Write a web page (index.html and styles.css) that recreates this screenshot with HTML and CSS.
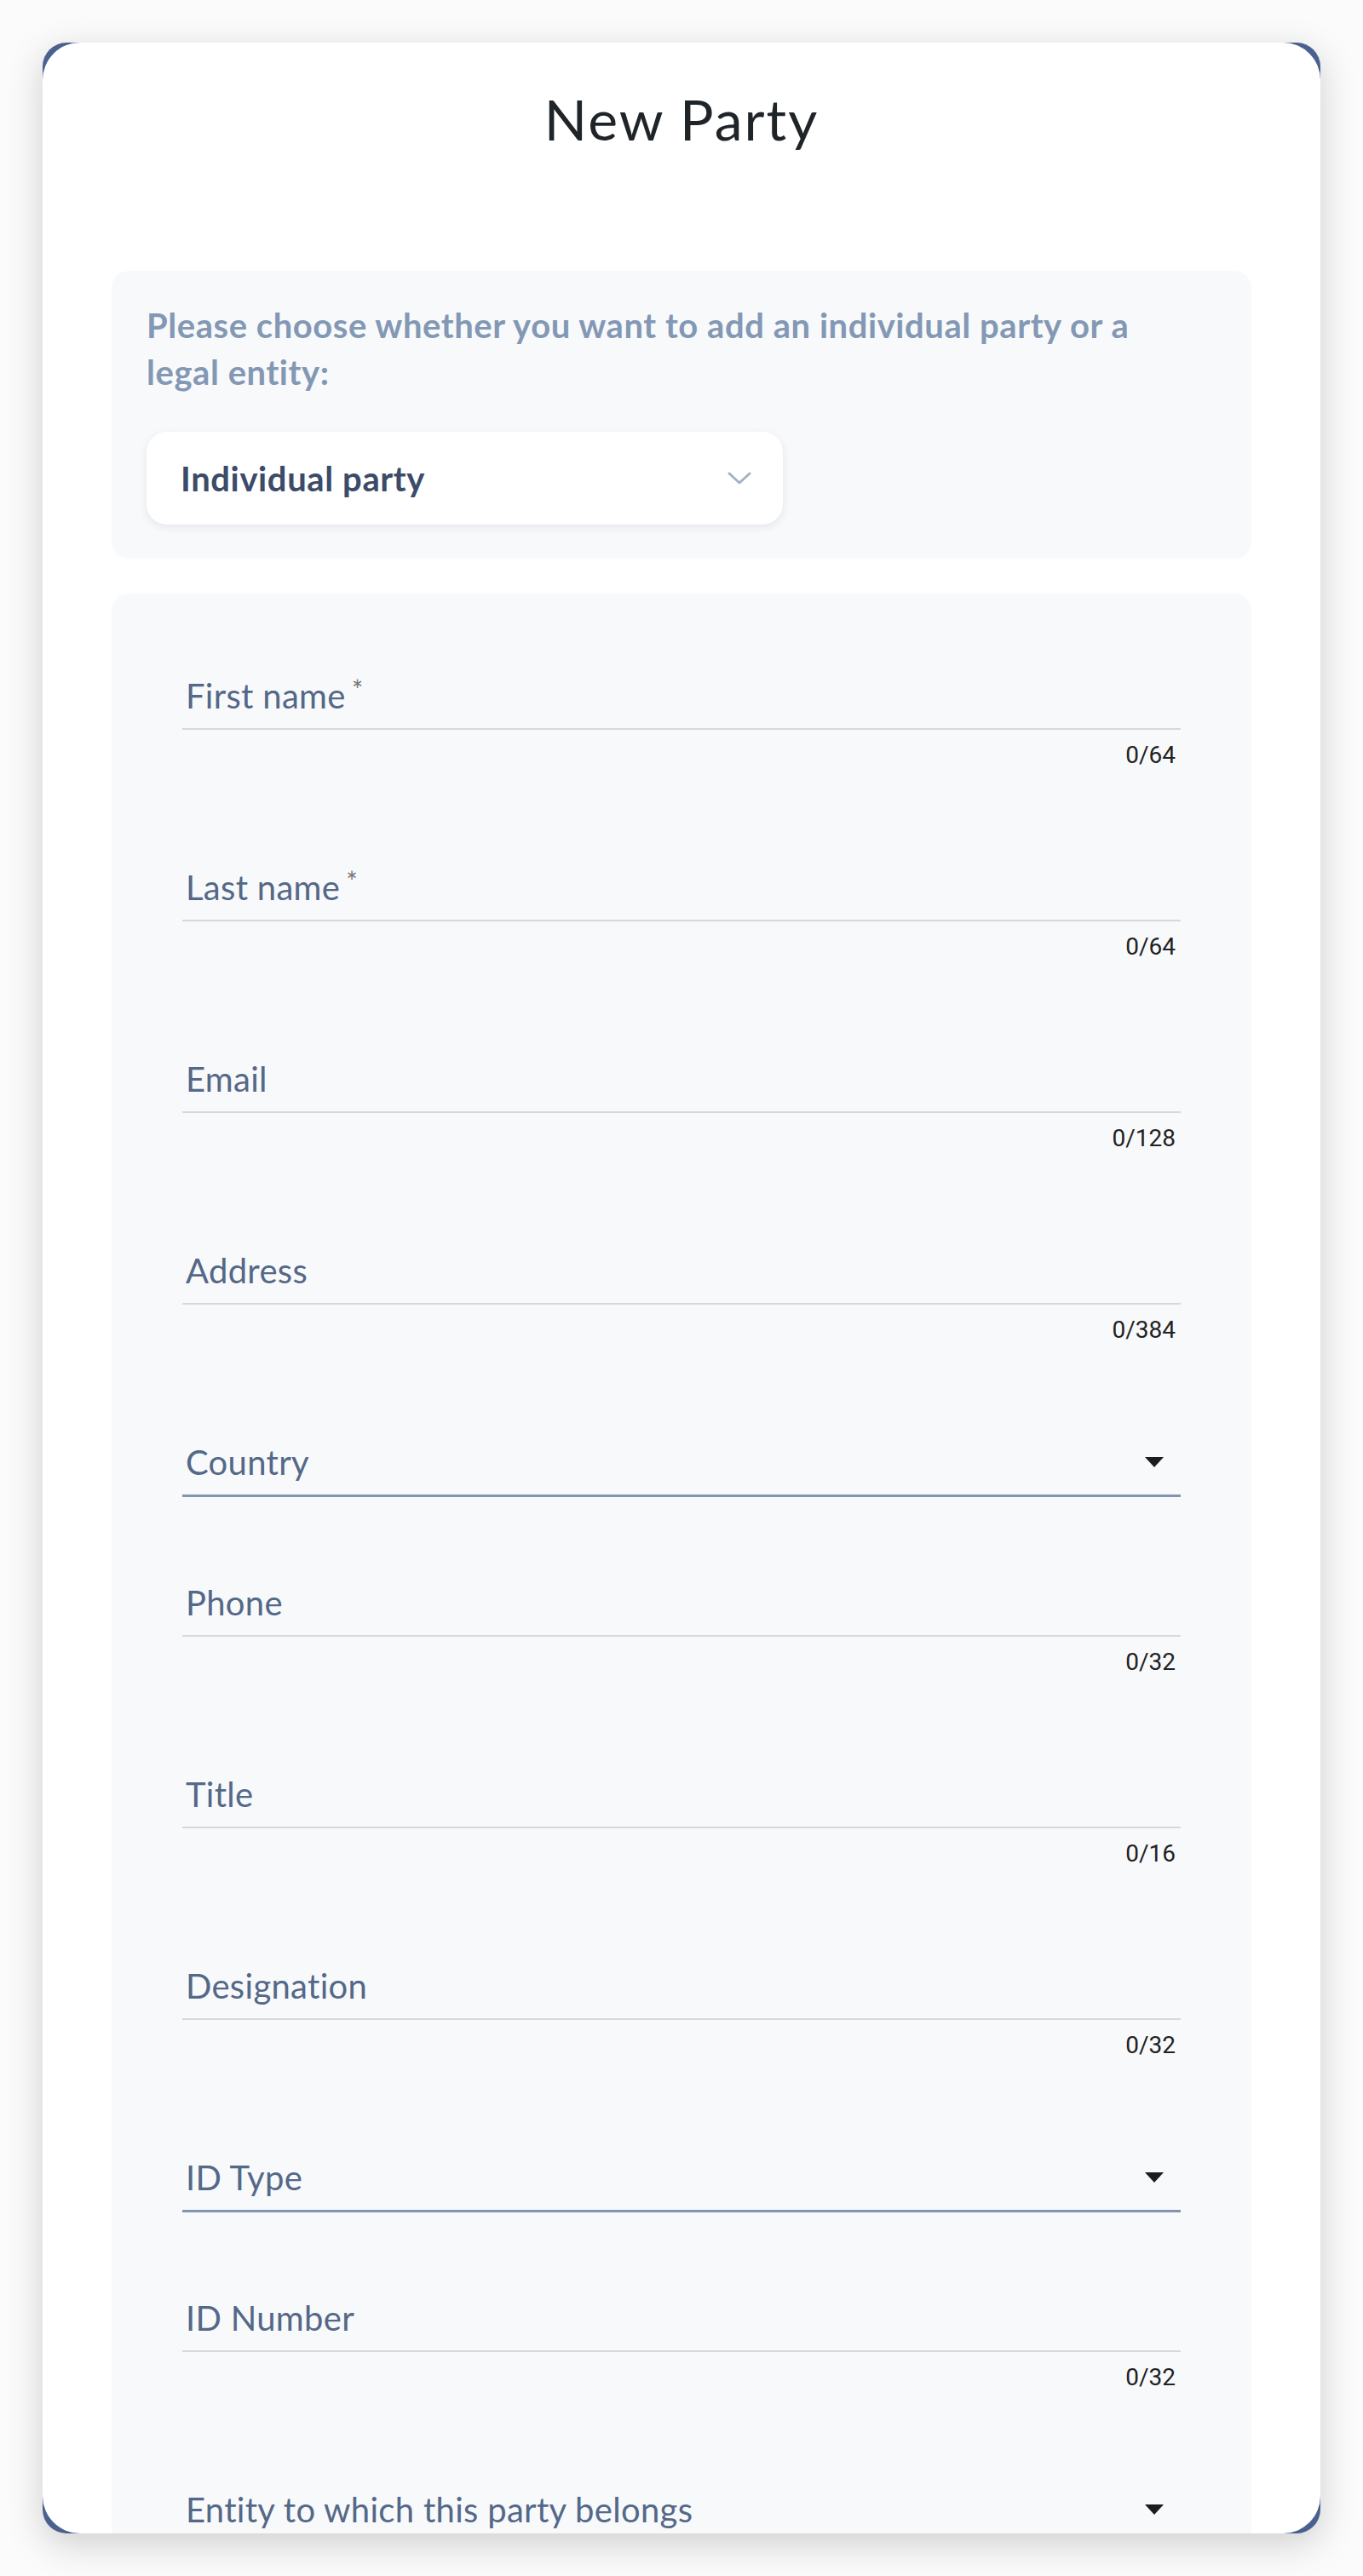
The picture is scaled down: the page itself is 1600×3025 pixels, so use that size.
FILE: index.html
```html
<!DOCTYPE html>
<html lang="en">
<head>
    <meta charset="UTF-8">
    <meta name="viewport" content="width=device-width, initial-scale=1.0">
    <title>New Party</title>
    <link rel="stylesheet" href="styles.css">
</head>
<body>

    <div class="frame">
        <div class="card">
            <h2 class="title">New Party</h2>

            <div class="panel type-panel">
                <p class="prompt">Please choose whether you want to add an individual party or a legal entity:</p>
                <div class="dropdown">
                    <span class="dropdown-value">Individual party</span>
                    <svg class="chevron" width="28" height="16" viewBox="0 0 28 16">
                        <polyline points="2,2 14,13 26,2" fill="none" stroke="#a6b0c4" stroke-width="3" stroke-linecap="round" stroke-linejoin="round"/>
                    </svg>
                </div>
            </div>

            <div class="panel form-panel">
                <div class="field">
                    <div class="control"><span class="label">First name<span class="req">*</span></span></div>
                    <div class="counter">0/64</div>
                </div>
                <div class="field">
                    <div class="control"><span class="label">Last name<span class="req">*</span></span></div>
                    <div class="counter">0/64</div>
                </div>
                <div class="field">
                    <div class="control"><span class="label">Email</span></div>
                    <div class="counter">0/128</div>
                </div>
                <div class="field">
                    <div class="control"><span class="label">Address</span></div>
                    <div class="counter">0/384</div>
                </div>
                <div class="field select">
                    <div class="control"><span class="label">Country</span><span class="arrow"></span></div>
                </div>
                <div class="field">
                    <div class="control"><span class="label">Phone</span></div>
                    <div class="counter">0/32</div>
                </div>
                <div class="field">
                    <div class="control"><span class="label">Title</span></div>
                    <div class="counter">0/16</div>
                </div>
                <div class="field">
                    <div class="control"><span class="label">Designation</span></div>
                    <div class="counter">0/32</div>
                </div>
                <div class="field select">
                    <div class="control"><span class="label">ID Type</span><span class="arrow"></span></div>
                </div>
                <div class="field">
                    <div class="control"><span class="label">ID Number</span></div>
                    <div class="counter">0/32</div>
                </div>
                <div class="field select">
                    <div class="control"><span class="label">Entity to which this party belongs</span><span class="arrow"></span></div>
                </div>
            </div>
        </div>
    </div>

</body>
</html>
```

FILE: styles.css
```css
body {
    font-family: Lato, "Open Sans", sans-serif;
    background-color: #fbfbfb;
    margin: 0;
    padding: 50px 0;
}

/* window with the dark corners behind the card */
.frame {
    width: 1500px;
    height: 2925px;
    margin: 0 auto;
    background-color: #4a6190;
    border-radius: 28px;
    box-shadow: 0 12px 44px rgba(0, 0, 0, 0.18);
}

.card {
    height: 100%;
    background-color: white;
    border-radius: 44px;
    overflow: hidden;
    padding: 50px 81px 0;
    box-sizing: border-box;
}

.title {
    margin: 0 0 138px;
    font-size: 66px;
    line-height: 80px;
    letter-spacing: 2px;
    font-weight: 400;
    color: #1f2429;
    text-align: center;
}

.panel {
    background-color: #f8f9fb;
    border-radius: 20px;
}

.type-panel {
    padding: 37px 41px 40px;
    margin-bottom: 41px;
}

.prompt {
    max-width: 1220px;
    margin: 0 0 42px;
    font-size: 40px;
    line-height: 55px;
    letter-spacing: 0.55px;
    font-weight: 700;
    color: #8398b4;
}

.dropdown {
    width: 747px;
    height: 109px;
    box-sizing: border-box;
    padding: 0 37px 0 40px;
    background-color: white;
    border-radius: 24px;
    box-shadow: 0 3px 10px rgba(40, 60, 90, 0.1);
    display: flex;
    align-items: center;
    justify-content: space-between;
}

.dropdown-value {
    font-size: 40px;
    letter-spacing: 0.6px;
    font-weight: 700;
    color: #3b4b69;
}

.form-panel {
    padding: 96px 83px 300px;
}

.field {
    margin-bottom: 100px;
}

.control {
    display: flex;
    align-items: center;
    justify-content: space-between;
    padding: 0 20px 14px 4px;
    border-bottom: 2px solid #d5d8dd;
}

.select .control {
    border-bottom: 3px solid #8095b0;
}

.label {
    font-size: 40px;
    line-height: 48px;
    letter-spacing: 0.3px;
    color: #546888;
}

.req {
    font-size: 32px;
    color: #747474;
    vertical-align: top;
    margin-left: 7px;
    line-height: 34px;
}

.arrow {
    width: 0;
    height: 0;
    border-left: 11px solid transparent;
    border-right: 11px solid transparent;
    border-top: 12px solid #1c1c1c;
}

.counter {
    padding: 14px 6px 15px 0;
    font-family: Roboto, "Liberation Sans", sans-serif;
    font-size: 28px;
    line-height: 32px;
    color: #222;
    text-align: right;
}
```
